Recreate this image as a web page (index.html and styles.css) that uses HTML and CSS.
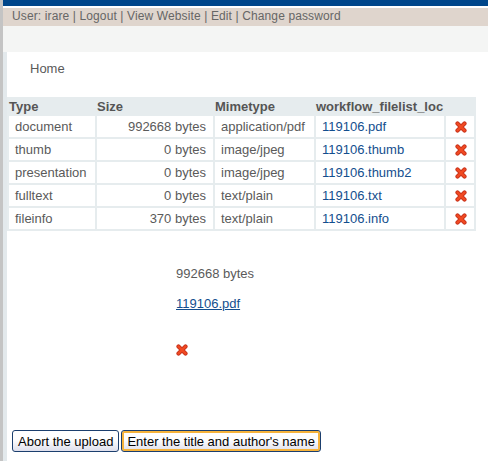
FILE: index.html
```html
<!DOCTYPE html>
<html>
<head>
<meta charset="utf-8">
<link rel="stylesheet" href="styles.css">
</head>
<body>
<div class="frame">
  <div class="topbar"></div>
  <div class="userbar">User: irare | Logout | View Website | Edit | Change password</div>
  <div class="graybar"></div>
  <div class="content">
    <div class="crumb">Home</div>
    <table class="files">
      <thead>
        <tr><th class="c-type">Type</th><th class="c-size">Size</th><th class="c-mime">Mimetype</th><th class="c-loc">workflow_filelist_loc</th><th class="c-del"></th></tr>
      </thead>
      <tbody>
        <tr><td>document</td><td class="num">992668 bytes</td><td>application/pdf</td><td><a href="#">119106.pdf</a></td><td class="del"><svg class="x" viewBox="0 0 12 12"><path class="xo" d="M2.5 2.5L9.5 9.5M9.5 2.5L2.5 9.5"/><path class="xi" d="M2.5 2.5L9.5 9.5M9.5 2.5L2.5 9.5"/></svg></td></tr>
        <tr><td>thumb</td><td class="num">0 bytes</td><td>image/jpeg</td><td><a href="#">119106.thumb</a></td><td class="del"><svg class="x" viewBox="0 0 12 12"><path class="xo" d="M2.5 2.5L9.5 9.5M9.5 2.5L2.5 9.5"/><path class="xi" d="M2.5 2.5L9.5 9.5M9.5 2.5L2.5 9.5"/></svg></td></tr>
        <tr><td>presentation</td><td class="num">0 bytes</td><td>image/jpeg</td><td><a href="#">119106.thumb2</a></td><td class="del"><svg class="x" viewBox="0 0 12 12"><path class="xo" d="M2.5 2.5L9.5 9.5M9.5 2.5L2.5 9.5"/><path class="xi" d="M2.5 2.5L9.5 9.5M9.5 2.5L2.5 9.5"/></svg></td></tr>
        <tr><td>fulltext</td><td class="num">0 bytes</td><td>text/plain</td><td><a href="#">119106.txt</a></td><td class="del"><svg class="x" viewBox="0 0 12 12"><path class="xo" d="M2.5 2.5L9.5 9.5M9.5 2.5L2.5 9.5"/><path class="xi" d="M2.5 2.5L9.5 9.5M9.5 2.5L2.5 9.5"/></svg></td></tr>
        <tr><td>fileinfo</td><td class="num">370 bytes</td><td>text/plain</td><td><a href="#">119106.info</a></td><td class="del"><svg class="x" viewBox="0 0 12 12"><path class="xo" d="M2.5 2.5L9.5 9.5M9.5 2.5L2.5 9.5"/><path class="xi" d="M2.5 2.5L9.5 9.5M9.5 2.5L2.5 9.5"/></svg></td></tr>
      </tbody>
    </table>
    <div class="detail">
      <div class="dsize">992668 bytes</div>
      <a class="dlink" href="#">119106.pdf</a>
      <svg class="x dx" viewBox="0 0 12 12"><path class="xo" d="M2.5 2.5L9.5 9.5M9.5 2.5L2.5 9.5"/><path class="xi" d="M2.5 2.5L9.5 9.5M9.5 2.5L2.5 9.5"/></svg>
    </div>
    <div class="actions">
      <button class="btn">Abort the upload</button>
      <button class="btn btn-default">Enter the title and author's name</button>
    </div>
  </div>
</div>
</body>
</html>
```
FILE: styles.css
```css
html, body {
  margin: 0;
  padding: 0;
  background: #ffffff;
}
body {
  font-family: "Liberation Sans", Arial, sans-serif;
  font-size: 13px;
  color: #5a5a5a;
}
.frame {
  border-left: 3px solid #c4c4c4;
  min-height: 461px;
  box-sizing: border-box;
}
.topbar {
  height: 6px;
  background: #00468a;
  margin-bottom: 2px;
}
.userbar {
  height: 18px;
  line-height: 17px;
  background: #dfd5cd;
  padding-left: 9px;
  color: #666666;
  font-size: 12px;
  letter-spacing: 0.12px;
}
.graybar {
  height: 26px;
  background: #f4f5f4;
}
.content {
  border-left: 4px solid #e3e9ec;
  padding-top: 10px;
  min-height: 409px;
  box-sizing: border-box;
}
.crumb {
  padding-left: 23px;
  line-height: 14px;
  margin-bottom: 21px;
}
.files {
  border-collapse: separate;
  border-spacing: 2px;
  background: #e6ecee;
  width: 469px;
}
.files th {
  text-align: left;
  font-weight: bold;
  color: #555555;
  height: 15px;
  line-height: 14px;
  padding: 0;
}
.files th.c-type { width: 86px; }
.files th.c-size { width: 116px; }
.files th.c-mime { width: 99px; }
.files th.c-loc { width: 128px; }
.files td {
  background: #ffffff;
  height: 21px;
  padding: 0 6px;
  line-height: 15px;
  white-space: nowrap;
}
.files td.num {
  text-align: right;
  padding-right: 7px;
}
.files td.del {
  text-align: center;
  padding: 0 0 0 1px;
}
.files a {
  color: #134e8e;
  text-decoration: none;
}
.x {
  width: 12px;
  height: 12px;
  display: block;
}
.files .x {
  margin: 0 auto;
}
.xo {
  stroke: #c8331c;
  stroke-width: 4.2;
  stroke-linecap: round;
  fill: none;
}
.xi {
  stroke: #f24a22;
  stroke-width: 2.4;
  stroke-linecap: round;
  fill: none;
}
.detail {
  padding-left: 169px;
  padding-top: 35px;
  display: flex;
  flex-direction: column;
  align-items: flex-start;
}
.dsize {
  line-height: 15px;
  margin-bottom: 15px;
}
.dlink {
  color: #134e8e;
  text-decoration: underline;
  line-height: 15px;
}
.dx {
  margin-top: 33px;
}
.actions {
  padding-left: 5px;
  padding-top: 74px;
  display: flex;
  gap: 2px;
}
.btn {
  font-family: "Liberation Sans", Tahoma, sans-serif;
  font-size: 13px;
  color: #000000;
  height: 22px;
  padding: 0 5px;
  border: 1px solid #1c3f6e;
  border-radius: 3px;
  background: linear-gradient(#ffffff, #ffffff 40%, #dedfec);
}
.btn-default {
  box-shadow: inset 0 0 0 2px #f6b33b;
}
```
